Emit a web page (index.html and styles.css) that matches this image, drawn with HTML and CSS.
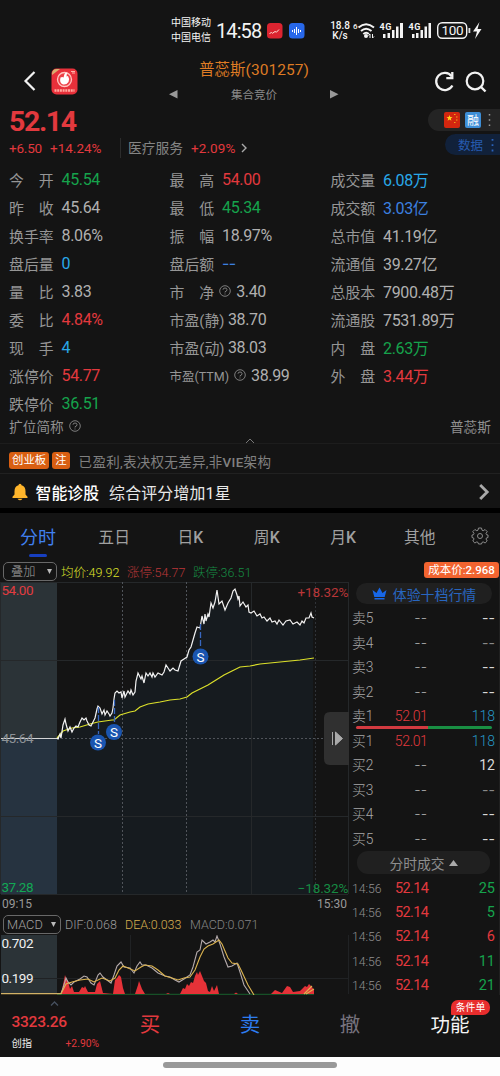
FILE: index.html
```html
<!DOCTYPE html>
<html lang="zh-CN">
<head>
<meta charset="utf-8">
<title>普蕊斯(301257)</title>
<link rel="stylesheet" href="styles.css">
</head>
<body>
<div class="app">
  <div class="status">
    <div class="carriers"><span>中国移动</span><span>中国电信</span></div>
    <div class="clock">14:58</div>
    <svg class="chip-a" width="16" height="16" viewBox="0 0 16 16"><rect width="15.500" height="15.500" rx="3.500" fill="#dc2430"/><path d="M2.500 10.500l2-1 1 .8L8 8.500l1.500.7L12 6.500" fill="none" stroke="#ffd9d0" stroke-width="1"/></svg>
    <svg class="chip-b" width="16" height="16" viewBox="0 0 16 16"><rect width="15.500" height="15.500" rx="3.500" fill="#2868ea"/><path d="M3.500 7v2M5.500 6v4M7.500 4v8M9.500 6v4M11.500 7v2" stroke="#fff" stroke-width="1"/></svg>
    <div class="speed"><span>18.8</span><span>K/s</span></div>
    <svg class="signals" width="130" height="20" viewBox="352 20 130 20">
      <g fill="none" stroke="#f4f4f4" stroke-width="2"><path d="M358.500 27.500q7.500-6.500 15.500 0M361 31q5-4.500 10.500 0M363.300 34q3-2.500 5.500 0"/></g>
      <circle cx="366" cy="36" r="2" fill="#f4f4f4"/><path d="M370 38v-4l-1.500 1.500M372.500 34v4l1.500-1.500" fill="none" stroke="#f4f4f4"/>
      <text x="353" y="29" class="tiny">6</text>
      <text x="379.500" y="30" class="g4" textLength="12">4G</text><text x="408.500" y="30" class="g4" textLength="12">4G</text>
      <g fill="#f4f4f4"><rect x="383" y="34" width="2.500" height="4"/><rect x="387.500" y="33" width="2.500" height="5"/><rect x="392" y="30" width="2.500" height="8"/><rect x="396" y="26.500" width="2.500" height="11.500"/><rect x="400" y="23" width="3" height="15"/>
      <rect x="412" y="34" width="2.500" height="4"/><rect x="416" y="33" width="2.500" height="5"/><rect x="420.500" y="30" width="2.500" height="8"/><rect x="424.500" y="26.500" width="2.500" height="11.500"/><rect x="428.500" y="23" width="2.500" height="15"/></g>
      <rect x="437.700" y="22.700" width="29" height="15.600" rx="4.500" fill="none" stroke="#f4f4f4" stroke-width="1.400"/><rect x="468.500" y="28" width="1.800" height="5" fill="#ddd"/>
      <text x="441.500" y="35.300" class="batt" textLength="22">100</text>
      <path d="M479.500 22l-6.500 9.500h4L475 39l6.500-10h-4z" fill="#f4f4f4"/>
    </svg>
  </div>

  <header class="header">
    <svg class="back" width="14" height="22" viewBox="0 0 14 22"><path d="M11.500 2L2.500 11l9 9" fill="none" stroke="#f2f2f2" stroke-width="2.200"/></svg>
    <svg class="logo" width="27" height="27" viewBox="0 0 27 27"><rect x=".5" y=".5" width="26" height="26" rx="5" fill="#e8303a"/><path d="M1 6q0-5 5-5h3L1 7z" fill="#d8b070"/><circle cx="13.500" cy="11.500" r="7" fill="#ee4148" stroke="#ffc5c0" stroke-width="1.300"/><path d="M9.500 9.500q2-1 3 0l1-3.500q1.500-2.500 2.500-1l-.5 3.500 1.500-.500q2 3 .5 6-2 3-5.500 2.500-4-1.500-2.500-7z" fill="#fff"/><path d="M20 3.500h4M21 5h3" stroke="#ffb4a8"/><path d="M3.500 22.500h20" stroke="#ffaaa0" stroke-width="2.500" stroke-dasharray="2 .7"/></svg>
    <div class="titles">
      <h1>普蕊斯<span>(301257)</span></h1>
      <div class="phase"><svg width="9" height="9"><path d="M8.500 0v8.500L0 4.300z" fill="#999"/></svg><span>集合竞价</span><svg width="9" height="9"><path d="M0 0v8.500l8.500-4.200z" fill="#999"/></svg></div>
    </div>
    <svg class="refresh" width="22" height="22" viewBox="0 0 22 22"><path d="M18.600 5.200A8.600 8.600 0 1 0 19.400 14.500" fill="none" stroke="#f2f2f2" stroke-width="2.300"/><path d="M19.300 1v6.200h-6" fill="none" stroke="#f2f2f2" stroke-width="2.300"/></svg>
    <svg class="search" width="22" height="22" viewBox="0 0 22 22"><circle cx="10" cy="10" r="8.300" fill="none" stroke="#f2f2f2" stroke-width="2.200"/><path d="M16 16l4.500 4.500" stroke="#f2f2f2" stroke-width="2.400"/></svg>
  </header>

  <section class="quote">
    <div class="quote-main">
      <div class="price">52.14</div>
      <div class="change"><span class="up c1">+6.50</span><span class="up c2">+14.24%</span><span class="sector">医疗服务</span><span class="up c3">+2.09%</span><svg width="7" height="10"><path d="M1 1l4 4-4 4" fill="none" stroke="#aaa" stroke-width="1.400"/></svg></div>
    </div>
    <div class="tags">
      <div class="tag t1"><svg width="16" height="16"><rect width="16" height="16" rx="2" fill="#d3260f"/><path d="M5.500 3l.8 2.100h2.200L6.800 6.500l.6 2.200-1.900-1.300-1.900 1.300.6-2.200-1.700-1.400h2.200z" fill="#ffd21e"/><path d="M10 2.500h1.500M12 5h1.500M12 8h1.500M10 10.500h1.500" stroke="#f0a51c"/></svg><b>融</b><svg width="3" height="14"><path d="M1.500 1v13" stroke="#999" stroke-width="1.500" stroke-dasharray="1.500 3.800"/></svg></div>
      <div class="tag t2"><span>数据</span><svg width="3" height="14"><path d="M1.500 1v13" stroke="#2a62ba" stroke-width="1.800" stroke-dasharray="1.800 3.500"/></svg></div>
    </div>
  </section>

  <section class="stats">
    <div class="col">
      <p><i>今　开</i><b class="dn">45.54</b></p><p><i>昨　收</i><b>45.64</b></p><p><i>换手率</i><b>8.06%</b></p><p><i>盘后量</i><b class="cy">0</b></p><p><i>量　比</i><b>3.83</b></p><p><i>委　比</i><b class="up">4.84%</b></p><p><i>现　手</i><b class="cy">4</b></p><p><i>涨停价</i><b class="up">54.77</b></p><p><i>跌停价</i><b class="dn">36.51</b></p>
    </div>
    <div class="col">
      <p><i>最　高</i><b class="up">54.00</b></p><p><i>最　低</i><b class="dn">45.34</b></p><p><i>振　幅</i><b>18.97%</b></p><p><i>盘后额</i><b class="bl dash">--</b></p>
      <p><i>市　净</i><svg class="q" width="12" height="12" viewBox="0 0 12 12"><circle cx="6" cy="6" r="5.300"/><path d="M4 4.700q0-1.700 2-1.700t2 1.600-2 2.200v.7M6 8.500v1"/></svg><b>3.40</b></p>
      <p><i>市盈(静)</i><b class="near">38.70</b></p><p><i>市盈(动)</i><b class="near">38.03</b></p>
      <p><i class="ttm">市盈(TTM)</i><svg class="q" width="12" height="12" viewBox="0 0 12 12"><circle cx="6" cy="6" r="5.300"/><path d="M4 4.700q0-1.700 2-1.700t2 1.600-2 2.200v.7M6 8.500v1"/></svg><b>38.99</b></p>
    </div>
    <div class="col">
      <p><i>成交量</i><b class="cy">6.08万</b></p><p><i>成交额</i><b class="bl">3.03亿</b></p><p><i>总市值</i><b>41.19亿</b></p><p><i>流通值</i><b>39.27亿</b></p><p><i>总股本</i><b>7900.48万</b></p><p><i>流通股</i><b>7531.89万</b></p><p><i>内　盘</i><b class="dn">2.63万</b></p><p><i>外　盘</i><b class="up">3.44万</b></p>
    </div>
  </section>
  <div class="fullname"><span>扩位简称</span><svg class="q" width="12" height="12" viewBox="0 0 12 12"><circle cx="6" cy="6" r="5.300"/><path d="M4 4.700q0-1.700 2-1.700t2 1.600-2 2.200v.7M6 8.500v1"/></svg><span class="end">普蕊斯</span></div>
  <div class="fold"><svg width="10" height="6"><path d="M1 5l4-4 4 4" fill="none" stroke="#777"/></svg></div>
  <div class="notice"><b>创业板</b><b>注</b><span>已盈利,表决权无差异,非<em>VIE</em>架构</span></div>
  <div class="diagnose">
    <svg width="16" height="18" viewBox="0 0 16 18"><path d="M8 .8q1.500 0 1.500 1.500 4 1.200 4 6v3.200l2 2.300v1.200H.5v-1.200l2-2.300V8.300q0-4.800 4-6Q6.500.8 8 .8zM5.500 15.700h5Q8 19 5.500 15.700z" fill="#ffb52b"/></svg>
    <strong>智能诊股</strong><span>综合评分增加1星</span>
    <svg class="go" width="11" height="16" viewBox="0 0 11 16"><path d="M1.200 1l7 7-7 7" fill="none" stroke="#aaa" stroke-width="2.800"/></svg>
  </div>

  <nav class="tabs">
    <a class="on">分时</a><a>五日</a><a>日<em>K</em></a><a>周<em>K</em></a><a>月<em>K</em></a><a>其他</a>
    <svg width="18" height="18" viewBox="0 0 18 18"><path d="M7.500 1h3l.5 2.200 1.200.5 1.900-1.200 2.100 2.100L15 6.500l.5 1.200 1.500.3v2.500l-1.500.4-.5 1.100 1.200 2-2.100 2-1.900-1.100-1.200.5-.5 1.600h-3L7 15.400l-1.200-.5L3.900 16l-2.100-2L3 12l-.5-1.100L1 10.500V8l1.500-.3L3 6.500 1.800 4.600l2.100-2.100 1.900 1.200L7 3.200z" fill="none" stroke="#8a8a8a"/><circle cx="9" cy="9" r="2.500" fill="none" stroke="#8a8a8a"/></svg>
  </nav>

  <div class="market">
    <div class="charts">
      <div class="legend main-legend"><span class="pick p1">叠加<svg width="5" height="5"><path d="M0 0h5L2.500 5z" fill="#bbb"/></svg></span><span class="avg">均价:49.92</span><span class="lu">涨停:54.77</span><span class="ld">跌停:36.51</span></div>
      <svg class="plot" width="349" height="314" viewBox="0 581 349 314">
        <rect x="1" y="582" width="56" height="312" fill="#2b3337"/><rect x="1" y="738" width="56" height="156" fill="#263340"/>
        <path fill="#161b1f" d="M57 738L60 734 63 725 65 719 66 724 68 731 74 728 82 718 89 725 93 722 98 706 102 714 110 716 113 708 115 693 121 692 135 692 138 673 144 683 146 673 162 675 166 665 175 670 181 661 187 657 195 633 200 628 202 616 208 614 211 603 217 590 219 604 225 610 235 589 240 606 249 612 262 618 277 624 286 621 300 625 313 618V894H57z"/>
        <g stroke="#25282a" fill="none"><path d="M1 582.500H348M1 660.500H348M1 816.500H348M1 894.500H348M.5 582V894M348.500 582V894M251.500 582V894"/></g>
        <g stroke="#50545a" fill="none" stroke-dasharray="2 2"><path d="M122.500 582V894M186.500 582V894M57 738.500H348"/><path d="M315.500 582V894" stroke="#303338"/></g>
        <path d="M1 738.500H59" stroke="#d5d5d5"/>
        <path d="M57 738L63 731 66 730 72 728 80 727 90 724 98 722 112 720 114 720 120 715 130 712 135 711 140 707 148 704 160 702 170 700 180 699 187 697 192 693 200 689 208 685 216 680 224 675 232 671 240 667 250 666 260 664 280 662 300 660 314 658" stroke="#dce02a" stroke-width="1.200" fill="none"/>
        <path d="M57 738L58 739 60 734 61 738 63 725 65 719 66 724 68 731 70 727 72 732 74 728 76 726 78 727 80 722 82 718 84 720 86 718 87 721 89 725 91 726 93 722 95 718 97 709 98 706 100 708 102 714 104 710 105 715 107 711 109 714 110 716 112 713 113 708 114 699 115 693 117 691 119 693 121 692 122 698 124 691 125 697 128 691 130 694 131 690 133 695 135 692 136 681 138 673 140 677 141 679 142 676 144 683 146 673 148 676 150 673 152 677 153 673 155 677 158 673 162 675 164 672 166 665 168 668 170 671 173 668 175 670 178 671 181 661 184 659 187 657 189 650 191 647 193 640 195 633 197 627 200 628 202 616 204 624 205 614 206 621 208 614 209 617 211 603 213 608 215 602 217 590 219 604 222 601 225 610 228 603 231 598 233 591 235 589 237 595 238 599 239 596 240 606 243 602 246 607 248 605 249 612 251 613 254 611 257 616 260 614 262 618 264 617 267 621 270 618 272 622 275 621 277 624 279 620 283 625 286 621 290 620 293 624 297 622 300 625 302 621 304 623 306 618 309 618 311 613 312 617 314 618" stroke="#f2f2f2" stroke-width="1.200" fill="none"/>
        <path d="M98.500 707V734M114.500 700V724M200.500 624V648" stroke="#3868c0" stroke-width="1.300" stroke-dasharray="6 2"/>
        <g fill="#1a55b0"><circle cx="98" cy="742.500" r="8"/><circle cx="114" cy="732" r="8"/><circle cx="200.500" cy="656.500" r="8"/></g>
        <g class="mark"><text x="98" y="747.500">S</text><text x="114" y="737">S</text><text x="200.500" y="661.500">S</text></g>
        <g class="axis"><text x="1.500" y="595" fill="#e03c40" textLength="32">54.00</text><text x="1.500" y="743" fill="#8d9296" textLength="32">45.64</text><text x="1.500" y="892" fill="#12a854" textLength="32">37.28</text><text x="297.500" y="596.500" fill="#b93638" textLength="51">+18.32%</text><text x="297.500" y="892.500" fill="#168a43" textLength="51">−18.32%</text></g>
        <path d="M349 712h-19q-6 0-6 6v41q0 6 6 6h19z" fill="#303030"/><path d="M332.500 732v13M335.500 732v13l7-6.500z" fill="#aaa" stroke="#aaa"/>
      </svg>
      <div class="times"><span>09:15</span><span>15:30</span></div>
      <div class="legend macd-legend"><span class="pick p2">MACD<svg width="5" height="5"><path d="M0 0h5L2.500 5z" fill="#bbb"/></svg></span><span class="dif">DIF:0.068</span><span class="dea">DEA:0.033</span><span class="mac">MACD:0.071</span></div>
      <svg class="plot" width="349" height="60" viewBox="0 935 349 60">
        <rect x="1" y="935" width="56" height="59" fill="#2b3337"/>
        <path d="M348.500 935V994M130.500 935V994M1 978.500H348" stroke="#202224" fill="none"/>
        <path d="M57 994.300H314" stroke="#17602c"/>
        <path fill="#e53238" d="M61 994L63 985 65 975 66 978 68 981 70 989 72 986 74 992 79 992 82 987 84 988 85 986 88 992 95 992 97 984 100 981 103 993 113 994 115 980 117 978 119 975 121 977 123 988 125 994H135L138 985 139 981 142 989 145 994ZM166 994l2-1 2 1ZM180 994L183 988 185 989 187 984 189 986 191 982 193 983 195 976 197 972 198 975 200 971 202 976 204 981 206 983 208 991 210 992 212 986 214 991 217 985 219 994ZM234 994l2-1.500 2 1.500ZM271 994L275 990 282 993 287 986 290 987 293 992 300 991 305 986 307 987 309 984 312 987 314 990V994Z"/>
        <path d="M1 993.500H61L63 988 66 978 68 982 71 985 74 982 80 979 84 976 87 977 91 983 94 985 98 975 100 973 103 977 107 980 111 983 114 975 117 966 121 962 124 967 130 968 134 973 137 966 140 962 142 965 146 965 152 968 158 973 165 976 170 977 175 980 179 982 184 979 190 975 193 967 197 952 200 950 202 940 206 944 210 942 213 940 215 942 217 936 220 944 224 957 228 967 232 966 237 963 240 972 244 985 250 994" fill="none" stroke="#b5abac" stroke-width="1.100"/>
        <path d="M1 993.800H61L66 984 72 982 80 980 88 979 94 982 102 978 110 981 115 978 119 970 123 966 128 968 135 971 141 967 145 965 152 966 158 970 165 976 172 978 178 980 184 978 190 977 195 970 200 957 204 949 208 946 213 944 219 940 222 944 228 958 232 963 238 964 241 970 248 985 254 995M306 994l8-5M304 994l8-8" fill="none" stroke="#dcb450" stroke-width="1.100"/>
        <g class="axis" fill="#f0f0f0"><text x="1.500" y="948" textLength="32">0.702</text><text x="1.500" y="982.500" textLength="32">0.199</text></g>
      </svg>
    </div>

    <aside class="book">
      <div class="cost">成本价:<em>2.968</em></div>
      <div class="cap c-top"><svg width="15" height="13" viewBox="0 0 15 13"><path d="M.5 3l4 3L7.500.5l3 5.500 4-3-1.800 7h-10.400zM2.500 11h10v1.500h-10z" fill="#1767e8"/></svg>体验十档行情</div>
      <ul class="levels">
        <li><span>卖5</span><span class="dash">--</span><b class="dash">--</b></li><li><span>卖4</span><span class="dash">--</span><b class="dash dim">--</b></li><li><span>卖3</span><span class="dash">--</span><b class="dash">--</b></li><li><span>卖2</span><span class="dash">--</span><b class="dash">--</b></li>
        <li class="split"><span>卖1</span><span class="lup">52.01</span><b class="tq">118</b></li>
        <li><span>买1</span><span class="lup">52.01</span><b class="tq">118</b></li><li><span>买2</span><span class="dash">--</span><b>12</b></li><li><span>买3</span><span class="dash">--</span><b class="dash dim">--</b></li><li><span>买4</span><span class="dash">--</span><b class="dash">--</b></li><li><span>买5</span><span class="dash">--</span><b class="dash">--</b></li>
      </ul>
      <div class="cap c-mid">分时成交<svg width="9" height="6"><path d="M0 6L4.500 0 9 6z" fill="#aaa"/></svg></div>
      <ul class="trades">
        <li><span>14:56</span><span>52.14</span><b class="dn">25</b></li><li><span>14:56</span><span>52.14</span><b class="dn">5</b></li><li><span>14:56</span><span>52.14</span><b class="up">6</b></li><li><span>14:56</span><span>52.14</span><b class="dn">11</b></li><li><span>14:56</span><span>52.14</span><b class="dn">21</b></li>
      </ul>
    </aside>
  </div>

  <footer class="actions">
    <div class="index"><svg width="9" height="5"><path d="M1 4.500l3.500-3.500L8 4.500" fill="none" stroke="#46505f" stroke-width="1.300"/></svg><strong>3323.26</strong><div><span>创指</span><span class="up">+2.90%</span></div></div>
    <a class="buy">买</a><a class="sell">卖</a><a class="cancel">撤</a><a class="more">功能<span>条件单</span></a>
  </footer>
  <div class="homebar"><i></i></div>
</div>
</body>
</html>
```
FILE: styles.css
```css
* { box-sizing: border-box; margin: 0; padding: 0; }
body { background: #141414; color: #a8a8a8; font-family: Roboto, "Noto Sans CJK SC", sans-serif; }
i, em { font-style: normal; }
ul { list-style: none; }
svg { display: block; flex: none; }
.app { width: 500px; height: 1076px; overflow: hidden; display: flex; flex-direction: column; background: #141414; }
.app > * { flex: none; }
.up { color: #e2393e !important; }
.dn { color: #16a34c !important; }
.cy { color: #29a8e8 !important; }
.bl { color: #3c80e0 !important; }
.dash { font-family: Inter, sans-serif; }

/* phone status bar */
.status { height: 60px; padding: 14px 0 0 171px; display: flex; align-items: flex-start; color: #f4f4f4; white-space: nowrap; }
.carriers { width: 45px; font-size: 10px; line-height: 15px; display: flex; flex-direction: column; padding-top: 1px; }
.clock { width: 51px; font-size: 20px; line-height: 34px; letter-spacing: -.9px; }
.chip-a { margin-top: 9px; }
.chip-b { margin: 9px 0 0 6px; }
.speed { width: 23px; margin-left: 25px; padding-top: 7px; font-size: 10px; font-weight: 500; line-height: 10px; display: flex; flex-direction: column; align-items: center; padding-right: 3px; }
.speed span:first-child { letter-spacing: -.1px; }
.signals { margin-top: 6px; margin-left: -1px; fill: #f4f4f4; }
.tiny { font-size: 8px; font-weight: 500; }
.g4 { font-size: 9px; font-weight: 700; }
.batt { font-size: 13.5px; }

/* title bar */
.header { height: 46px; display: flex; align-items: flex-start; }
.back { margin: 10px 0 0 23px; }
.logo { margin: 8px 0 0 14px; }
.titles { width: 170px; margin-left: 91px; }
h1 { color: #de7b24; font-size: 15.500px; font-weight: 400; line-height: 20px; text-align: center; white-space: nowrap; }
h1 span { letter-spacing: .05px; }
.phase { display: flex; justify-content: space-between; align-items: center; height: 16px; margin-top: 6px; font-size: 11.500px; color: #8a8a8a; }
.refresh { margin: 11px 0 0 94px; }
.search { margin: 11px 0 0 10px; }

.quote { height: 59px; display: flex; justify-content: space-between; }
.price { height: 32px; padding: 1px 0 0 9px; font-size: 28.500px; font-weight: 700; line-height: 29px; color: #e2393e; letter-spacing: -1.400px; }
.change { display: flex; align-items: center; height: 20px; padding-left: 9px; font-size: 13.500px; white-space: nowrap; }
.c1 { width: 41px; letter-spacing: -.2px; }
.c2 { width: 70px; letter-spacing: 0; }
.sector { border-left: 1px solid #2c2c2c; padding-left: 7px; width: 71px; font-size: 13.750px; color: #858585; line-height: 20px; }
.c3 { width: 50px; letter-spacing: .1px; }
.tags { display: flex; flex-direction: column; align-items: flex-end; padding-top: 3px; gap: 3px; }
.tag { display: flex; align-items: center; border-radius: 11px 0 0 11px; height: 22px; }
.t1 { width: 72px; background: #242424; padding-left: 16px; gap: 5px; }
.t1 b { width: 16px; height: 16px; border-radius: 2px; background: #3d8ed6; color: #fff; font: 400 12px/16px "Noto Sans CJK SC"; text-align: center; margin-right: 2px; }
.t2 { width: 55px; height: 21px; background: #11213a; color: #275cb0; padding-left: 13px; font-size: 12.500px; gap: 8px; }

.stats { display: grid; grid-template-columns: 160.500px 161px 1fr; height: 252px; padding-left: 9px; }
.col p { display: flex; align-items: center; height: 28px; white-space: nowrap; }
.col i { width: 52.500px; font-size: 14.900px; color: #969696; }
.col b { font-size: 16px; font-weight: 400; letter-spacing: -.35px; color: #b0b0b0; }
.col b.dash { letter-spacing: -.5px; }
.col:nth-child(2) p:nth-child(n+5) i { width: auto; }
.col:nth-child(2) p:nth-child(n+5) b { margin-left: 5px; }
.col:nth-child(2) .ttm { font-size: 12.500px; }
.col:nth-child(2) p:nth-child(n+5) .near { margin-left: 3.500px; }
.q { fill: none; stroke: #888; stroke-width: .9; margin-left: 5px; }
.fullname { display: flex; align-items: center; height: 18px; padding: 0 9px; font-size: 13.700px; color: #909090; }
.end { margin-left: auto; }
.fold { height: 9px; display: flex; justify-content: center; padding-top: 3px; border-bottom: 1px solid #1d1d1d; }
.notice { display: flex; align-items: center; height: 30px; padding: 4px 9px 0; border-bottom: 1px solid #212121; font-size: 13.500px; color: #808080; }
.notice b { height: 17px; line-height: 17px; padding: 0 3px; margin-right: 3px; background: #d95f12; color: #fff; border-radius: 3px; font-size: 11.400px; font-weight: 400; }
.notice span { margin-left: 6px; letter-spacing: .3px; }
.notice em, .tabs em { font-weight: 500; }
.diagnose { display: flex; align-items: center; height: 34px; padding: 2px 10px 0 12px; font-size: 15.900px; color: #e8e8e8; }
.diagnose strong { margin-left: 7.500px; font-weight: 500; color: #fff; }
.diagnose span { margin-left: 10px; letter-spacing: .2px; }
.go { margin-left: auto; }

.tabs { position: relative; display: grid; grid-template-columns: 76px repeat(4, 76.300px) 77px 1fr; align-items: center; height: 53px; border-top: 5px solid #000; text-align: center; color: #a0a0a0; font-size: 15.800px; padding-top: 2px; }
.tabs a { height: 38px; line-height: 38px; }
.tabs svg { margin: 0 0 4px 13px; }
.tabs .on { position: relative; color: #4080f0; font-size: 18px; }
.tabs .on::after { content: ""; position: absolute; left: 29px; bottom: 0; width: 18px; height: 3px; border-radius: 2px; background: #173fc0; }

.market { display: flex; height: 434px; }
.charts { width: 349px; display: flex; flex-direction: column; }
.legend { height: 20px; display: flex; align-items: center; font-size: 12.500px; padding-left: 3px; white-space: nowrap; font-weight: 300; }
.pick { height: 19px; border: 1px solid #686868; border-radius: 5px; display: flex; align-items: center; justify-content: space-between; color: #a0a0a0; padding: 0 5px 0 7px; font-size: 12.200px; margin-right: 4px; }
.p1 { width: 54px; padding-right: 4px; }
.p2 { width: 58px; padding: 0 4px 0 3px; font-size: 12.800px; }
.avg { width: 66px; color: #dfe12a; }
.lu { width: 66px; color: #b93638; }
.ld { color: #168a43; }
.plot text { font-family: Roboto; }
.axis { font-size: 13.500px; }
.mark { fill: #fff; font-size: 13.500px; text-anchor: middle; }
.times { display: flex; justify-content: space-between; height: 19px; padding: 1px 2px 0; line-height: 16px; font-size: 12px; color: #999; }
.macd-legend { height: 21px; }
.dif { width: 60px; color: #999; }
.dea { width: 65px; color: #d8b050; }
.mac { color: #858585; }

.book { width: 151px; border-right: 1px solid #202020; }
.cost { width: 75px; height: 16px; margin: 1px 0 5px 75px; border-radius: 3px; background: #f26430; color: #fff; font-size: 11.500px; line-height: 16px; text-align: center; white-space: nowrap; }
.cost em { font-weight: 500; }
.cap { display: flex; align-items: center; justify-content: center; border-radius: 11px; background: #202020; }
.c-top { width: 136px; height: 21px; margin-left: 7px; color: #2866c0; font-size: 13.900px; gap: 6px; }
.levels { padding-top: 2px; height: 247px; }
.levels li { display: grid; grid-template-columns: 40px 39px 1fr; height: 24.500px; align-items: center; padding: 0 4px 0 3px; font-size: 14px; line-height: 24.500px; font-weight: 300; }
.levels span:nth-child(2), .levels b, .trades b { text-align: right; }
.levels span:first-child { font-size: 13.800px; }
.levels b { font-weight: 400; color: #d8d8d8; }
.levels span.dash { padding-right: 4px; }
.levels .dim { color: #888; }
.levels .lup { color: #e2393e; font-size: 14px; letter-spacing: -.35px; padding-right: 3.500px; }
.levels .tq { color: #2698c4; font-weight: 300; font-size: 14px; }
.split { position: relative; }
.split::after { content: ""; position: absolute; left: 7px; bottom: 0; width: 136px; height: 3px; border-radius: 2px; background: linear-gradient(90deg, #d23a40 53%, #198f43 53%); }
.c-mid { width: 133px; height: 23px; margin-left: 8px; color: #8e8e8e; font-size: 13.800px; gap: 4px; }
.trades { padding-top: 3px; }
.trades li { display: grid; grid-template-columns: 43px 40px 1fr; height: 24.200px; line-height: 24.200px; padding: 0 4px 0 3px; font-size: 14.500px; }
.trades span:first-child { font-size: 12.200px; color: #909090; font-weight: 300; }
.trades span:nth-child(2) { color: #e2393e; letter-spacing: -.6px; }
.trades b { font-weight: 400; }

.actions { display: grid; grid-template-columns: 100px 100px 100px 100px 100px; height: 62px; }
.actions a { font-size: 20.500px; line-height: 61px; text-align: center; }
.index { padding: 6px 0 0 11.500px; }
.index svg { margin-left: 38px; }
.index strong { display: block; color: #e2393e; font-size: 15.500px; font-weight: 500; line-height: 19px; margin-top: 7px; letter-spacing: -.25px; }
.index div { display: flex; justify-content: space-between; font-size: 10.300px; line-height: 15px; margin-top: 4px; padding-right: 1px; color: #eee; }
.buy { color: #e2393e; }
.sell { color: #2d7cf0; }
.cancel { color: #77737e; }
.more { position: relative; color: #f5f5f5; font-size: 19.500px !important; }
.more span { position: absolute; left: 51px; top: 5px; width: 39px; height: 15px; border-radius: 7px 7px 7px 1px; background: #e82d2d; color: #fff; font-size: 9.800px; line-height: 15px; }
.homebar { height: 19px; background: #fdfdfd; padding: 5px 0 0 163px; }
.homebar i { display: block; width: 174px; height: 6px; border-radius: 3px; background: #999; }
```
